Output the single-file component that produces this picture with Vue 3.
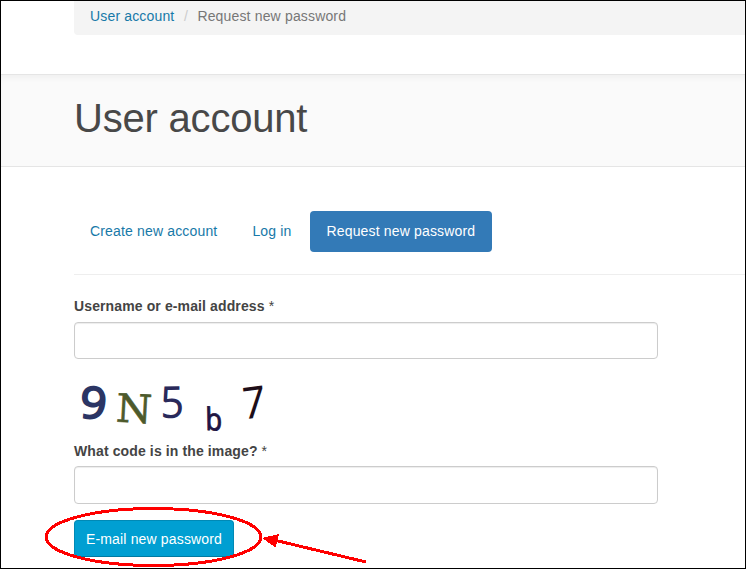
<script setup>
import { ref } from 'vue'

const tabs = [
  { label: 'Create new account', active: false },
  { label: 'Log in', active: false },
  { label: 'Request new password', active: true },
]
const username = ref('')
const code = ref('')
</script>

<template>
  <div class="page">
    <nav class="breadcrumb">
      <a>User account</a>
      <span class="slash">/</span>
      <span class="current">Request new password</span>
    </nav>

    <header class="hero">
      <h1>User account</h1>
    </header>

    <main class="content">
      <nav class="tabs">
        <a v-for="tab in tabs" :key="tab.label" class="tab" :class="{ active: tab.active }">{{ tab.label }}</a>
      </nav>

      <form class="form" @submit.prevent>
        <label for="username">Username or e-mail address <span class="required">*</span></label>
        <input id="username" v-model="username" type="text" />

        <svg class="captcha" width="210" height="60" viewBox="0 0 210 60">
          <text class="nine" transform="translate(5 37.500) rotate(4)" textLength="27" lengthAdjust="spacingAndGlyphs">9</text>
          <text class="en" transform="translate(41.500 41.500) rotate(3)" textLength="36" lengthAdjust="spacingAndGlyphs">N</text>
          <text class="five" transform="translate(86.500 38) rotate(-1)" textLength="24" lengthAdjust="spacingAndGlyphs">5</text>
          <text class="bee" transform="translate(131.500 50) rotate(2) skewX(3)" textLength="17" lengthAdjust="spacingAndGlyphs">b</text>
          <text class="seven" transform="translate(169.500 39.500) rotate(-7) skewX(-3)" textLength="23" lengthAdjust="spacingAndGlyphs">7</text>
        </svg>

        <label class="code-label" for="code">What code is in the image? <span class="required">*</span></label>
        <input id="code" v-model="code" class="code-input" type="text" />

        <button class="submit" type="submit">E-mail new password</button>
      </form>
    </main>

    <svg class="annotation" width="746" height="569" viewBox="0 0 746 569" shape-rendering="crispEdges">
      <ellipse cx="153.5" cy="537" rx="107.5" ry="28.5" fill="none" stroke="#f00" stroke-width="3" />
      <path d="M274 540L366 562" stroke="#f00" stroke-width="3" />
      <path d="M262 538L279 534L275.500 547.500Z" fill="#f00" />
    </svg>
  </div>
</template>

<style>
body {
  margin: 0;
  overflow: hidden;
}
</style>

<style scoped>
* {
  box-sizing: border-box;
}

.page {
  position: relative;
  width: 746px;
  height: 569px;
  overflow: hidden;
  border: 1px solid #000;
  background: #fff;
  color: #444;
  font: 14px/20px "Liberation Sans", Arial, sans-serif;
  letter-spacing: 0.16px;
}

.breadcrumb {
  display: flex;
  height: 34px;
  margin-left: 73px;
  padding: 5px 16px;
  border-bottom-left-radius: 4px;
  background: #f4f4f4;
}

a {
  color: #1779a8;
}

.slash {
  width: 23px;
  text-align: center;
  color: #ccc;
}

.current {
  color: #777;
}

.hero {
  height: 93px;
  margin-top: 39px;
  padding: 19px 73px 0;
  border-top: 1px solid #e5e5e5;
  border-bottom: 1px solid #e5e5e5;
  background: #fafafa;
  box-shadow: inset 0 5px 6px -2px rgba(0, 0, 0, 0.045);
}

h1 {
  margin: 0;
  font-size: 40px;
  line-height: 48px;
  font-weight: 400;
  letter-spacing: -0.2px;
  color: #484848;
}

.content {
  padding: 44px 0 0 73px;
}

.tabs {
  display: flex;
  gap: 3px;
  height: 64px;
  border-bottom: 1px solid #eee;
}

.tab {
  height: 41px;
  padding: 10px 16px;
  border-radius: 4px;
  white-space: nowrap;
}

.tab.active {
  width: 182px;
  margin-left: -0.6px;
  padding: 10px 0 10px 16.6px;
  background: #337ab7;
  color: #fff;
}

.form {
  display: flex;
  flex-direction: column;
  align-items: flex-start;
  width: 584px;
  padding-top: 21px;
}

label {
  height: 26px;
  font-weight: 700;
  letter-spacing: 0.12px;
}

.required {
  font-weight: 400;
}

input {
  width: 100%;
  height: 37px;
  padding: 8px 12px;
  border: 1px solid #ccc;
  border-radius: 4px;
  background: #fff;
  box-shadow: inset 0 1px 1px rgba(0, 0, 0, 0.075);
  font: inherit;
}

.captcha {
  display: block;
  margin-top: 21px;
  overflow: visible;
}

.code-label {
  margin-top: 1px;
  height: 25px;
}

.code-input {
  height: 38px;
}

.submit {
  width: 160px;
  height: 37px;
  margin-top: 16px;
  padding: 0;
  border: 1px solid #0089b5;
  border-bottom-color: #007aa1;
  border-radius: 4px;
  background: #009fd2;
  color: #fff;
  font: inherit;
  letter-spacing: inherit;
  white-space: nowrap;
}

.nine {
  font: 400 44px "Noto Sans", sans-serif;
  fill: #2b3564;
  stroke: #2b3564;
  stroke-width: 1.6px;
}

.en {
  font: 400 39px "DejaVu Serif", serif;
  fill: #4d5a2b;
  stroke: #4d5a2b;
  stroke-width: 0.6px;
}

.five {
  font: 400 44px "Noto Sans", sans-serif;
  fill: #29295a;
}

.bee {
  font: 400 31px "Noto Sans", sans-serif;
  fill: #201442;
  stroke: #201442;
  stroke-width: 0.8px;
}

.seven {
  font: 400 44px "Noto Sans", sans-serif;
  fill: #1d0d18;
}

.annotation {
  position: absolute;
  top: -1px;
  left: -1px;
  pointer-events: none;
}
</style>
